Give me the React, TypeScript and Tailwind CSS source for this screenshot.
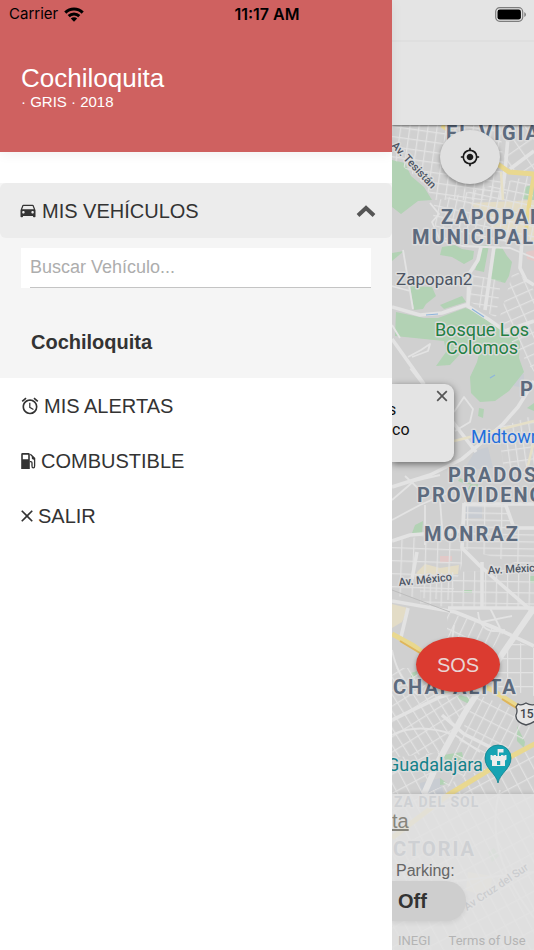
import { useState } from "react";
import { IoMdCar } from "react-icons/io";
import { MdAlarm, MdClose, MdMyLocation } from "react-icons/md";

function FuelPump({ className }: { className?: string }) {
  return (
    <svg className={className} viewBox="0 0 15 16" fill="none">
      <path
        d="M1.500 0 H7.500 Q8.800 0 8.800 1.300 V16 H0.200 V1.300 Q0.200 0 1.500 0 Z M1.800 1.800 V6.200 H7.200 V1.800 Z"
        fill="currentColor"
        fillRule="evenodd"
      />
      <path
        d="M9.300 1.200 L13.600 5.300 V13 Q13.600 14.900 12.300 14.900 Q11 14.900 11 13 V9.800 Q11 8.600 9.800 8.600 H8.800"
        stroke="currentColor"
        strokeWidth="1.3"
      />
      <path d="M10.800 2.800 V5.600 Q11.200 6.900 13.600 6.600 V5.200 Z" fill="currentColor" />
    </svg>
  );
}

const menuItems = [
  { label: "MIS ALERTAS", icon: MdAlarm, iconClass: "-ml-px h-5 w-5", gap: "gap-1" },
  { label: "COMBUSTIBLE", icon: FuelPump, iconClass: "h-4 w-[15px]", gap: "gap-[5px]" },
  { label: "SALIR", icon: MdClose, iconClass: "-ml-1 h-5 w-5", gap: "gap-px" },
] as const;

const greens = [
  "M392 160 L405 163 L411 176 L424 187 L432 200 L418 201 L401 214 L392 207 Z",
  "M525 187 L534 184 V200 L522 199 Z",
  "M442 247 L455 245 L462 249 L474 251 L473 259 L464 264 L452 257 L440 255 Z",
  "M480 246 L489 245 L484 272 L475 270 L479 258 Z",
  "M495 249 L501 246 L507 256 L512 262 L509 276 L505 283 L490 279 Z",
  "M392 253 L404 251 L392 261 Z",
  "M410 286 L432 287 L436 296 L426 304 L423 309 L414 310 Z",
  "M440 305 L462 296 L466 302 L444 309 Z",
  "M396 312 L424 318 L438 318 L465 308 L480 312 L494 324 L520 338 L520 349 L496 346 L470 352 L462 352 L450 365 L436 366 L446 352 L444 341 L395 336 Z",
  "M480 350 L520 344 L519 358 L524 372 L509 391 L495 401 L480 402 L471 393 L470 377 L477 362 Z",
  "M479 408 L484 409 L483 418 L478 416 Z",
  "M460 478 L474 485 L466 484 L458 481 Z",
  "M470 485 L478 484 L478 488 L467 490 Z",
  "M527 408 L534 403 V411 Z",
  "M412 533 L415 525 L423 521 L422 533 Z",
  "M464 590 H472 V593 H464 Z",
  "M530 576 H534 V583 H530 Z",
  "M411 673 L417 671 L416 677 L411 678 Z",
  "M456 694 L470 698 L469 704 L457 698 Z",
  "M517 726 L525 742 L524 748 L517 741 Z",
  "M443 755 L462 752 L464 762 L448 765 Z",
  "M440 778 L448 784 L440 785 Z",
  "M488 852 L494 848 L499 856 L492 862 Z",
];

const creams = [
  "M470 203 L534 200 V242 L498 238 L486 219 Z",
  "M418 571 L425 564 L440 568 L459 565 L458 574 L432 578 L414 577 Z",
  "M392 604 L408 608 L402 622 L392 628 Z",
  "M440 675 L460 680 L448 695 L437 689 Z",
  "M468 872 L492 876 L490 898 L466 890 Z",
];

// polygon, pattern rotation and block size of each neighbourhood
const blocks = [
  { id: "tesistan", area: "M392 125 H500 L507 200 H434 L420 180 L392 158 Z", rotate: 8, w: 9, h: 10 },
  { id: "vigia", area: "M498 125 H534 V172 L507 170 Z", rotate: -35, w: 17, h: 22 },
  { id: "centro", area: "M434 201 L528 176 L534 200 V243 L440 240 L433 220 Z", rotate: 12, w: 8, h: 10 },
  { id: "zoquipan", area: "M470 274 L501 281 L496 318 L469 301 Z", rotate: 8, w: 11, h: 9 },
  { id: "patria", area: "M514 268 L534 290 V372 L498 323 Z", rotate: -24, w: 14, h: 10 },
  { id: "midtown", area: "M498 428 L534 415 V476 L504 471 Z", rotate: -8, w: 8, h: 12 },
  { id: "providencia", area: "M464 504 H504 L514 529 H534 V568 L464 549 Z", rotate: 1, w: 17, h: 7 },
  { id: "monraz", area: "M392 541 L462 530 V565 L450 600 L392 596 Z", rotate: 2, w: 12, h: 13 },
  { id: "mexico", area: "M420 574 L534 568 V608 L420 606 Z", rotate: 1, w: 11, h: 11 },
  { id: "minerva", area: "M447 612 L505 631 L478 668 L447 655 Z", rotate: 25, w: 9, h: 19 },
  { id: "arcos", area: "M512 640 L534 648 V696 L482 684 Z", rotate: 0, w: 13, h: 14 },
  { id: "chapalita", area: "M392 668 L436 668 L478 686 L440 752 L392 758 Z", rotate: -32, w: 9, h: 13 },
  { id: "jardines", area: "M476 694 L516 710 L534 732 L440 792 Z", rotate: 27, w: 9, h: 15 },
  { id: "sol", area: "M392 758 L440 752 L424 794 L534 748 V950 H392 Z", rotate: -28, w: 11, h: 17 },
];

const minorRoads = [
  "M392 286 L410 291 M403 250 L413 309 M392 325 L400 338",
  "M430 203 L439 214 L432 222 L440 240 L462 246 L510 248 L534 258",
  "M408 357 L421 350 L430 344 L428 351 L412 357",
  "M454 412 L464 397 L473 409 L470 422 L455 431",
  "M392 500 L414 481 L440 475 M392 520 L420 505 L450 492 M405 476 L420 490",
  "M425 505 L425 545 M440 500 L443 540",
  "M454 625 L451 650 M392 650 Q398 680 418 695",
  "M478 612 Q480 636 505 630 M490 608 L500 628 M482 622 L512 616",
  "M392 735 Q418 722 455 735 L480 752",
  "M500 790 Q482 850 534 918 M392 910 L430 884 L534 872",
];

const majorRoads = [
  "M392 307 L420 315 L442 313 L466 305 L488 319 L505 331 L534 321",
  "M481 247 L478 260 L469 274 L468 305",
  "M494 247 L485 310",
  "M509 125 L505 172 L501 200 M534 151 L510 169",
  "M522 240 L520 268 L526 280 L534 285",
  "M392 339 L424 384 M411 368 L476 452",
  "M534 381 L518 407 L503 424 L481 443 L462 459 L430 475 L392 487",
  "M392 541 L410 535 L460 531 M464 503 L462 548 L480 566 L534 613",
  "M464 504 H534 M504 500 L514 528 H534",
  "M412 579 L417 552 M482 562 V608",
  "M392 601 L455 612 L498 629 L534 646",
  "M448 608 H534",
  "M408 608 L401 637",
  "M392 720 L440 697 L482 685",
  "M442 715 L464 734 L492 748",
];

function Blocks() {
  return (
    <>
      <defs>
        {blocks.map((b) => (
          <pattern
            key={b.id}
            id={b.id}
            width={b.w}
            height={b.h}
            patternUnits="userSpaceOnUse"
            patternTransform={`rotate(${b.rotate})`}
          >
            <path d={`M0 0 H${b.w} M0 0 V${b.h}`} stroke="#e2e2e2" strokeWidth="2.4" />
          </pattern>
        ))}
      </defs>
      {blocks.map((b) => (
        <path key={b.id} d={b.area} fill={`url(#${b.id})`} />
      ))}
    </>
  );
}

function CityMap() {
  return (
    <svg
      className="absolute inset-0 h-full w-full"
      viewBox="392 125 142 825"
      preserveAspectRatio="xMinYMin slice"
      fontFamily="Roboto, sans-serif"
      role="img"
      aria-label="Mapa"
    >
      <rect x="392" y="125" width="900" height="900" fill="#d0d0d0" />
      <path d="M475 451 L488 447 L493 468 L464 470 Z M512 374 H524 V388 L514 386 Z M466 506 H482 V518 H466 Z M420 783 L440 778 L444 795 H420 Z" fill="#c8ccd2" />
      <path d="M526 252 L534 250 V261 L527 259 Z M440 556 H452 V561 H440 Z M440 560 H450 V563 H440 Z" fill="#e2c9c8" />
      {creams.map((d) => (
        <path key={d} d={d} fill="#e3dcc6" />
      ))}
      {greens.map((d) => (
        <path key={d} d={d} fill="#b2d2b4" />
      ))}
      <Blocks />
      <g fill="none" stroke="#e3e3e3" strokeLinejoin="round">
        {minorRoads.map((d) => (
          <path key={d} d={d} strokeWidth="1.8" />
        ))}
        {majorRoads.map((d) => (
          <path key={d} d={d} strokeWidth="3.6" />
        ))}
        <path d="M534 608 L503 653 L464 714 L438 762 L424 794" strokeWidth="6" />
      </g>
      <path d="M426 315 L438 314 M472 309 L484 317 M490 378 L495 375" stroke="#8db5dc" strokeWidth="1.2" />
      <path d="M392 590 L450 612" stroke="#bcbcbc" strokeWidth="1" />
      <g fill="none" stroke="#e9d88f" strokeWidth="5" strokeLinejoin="round">
        <path d="M442 125 L462 140 L499 165 L509 172 L534 174" />
        <path d="M534 174 L529 205 L526 230" strokeWidth="4" />
        <path d="M392 634 L414 646 L440 665 L492 690 L517 706 L534 714" />
        <path d="M540 741 L512 756 L448 795 L392 838" />
      </g>
      <path d="M400 641 L420 653 M502 699 L518 709" fill="none" stroke="#dfb65b" strokeWidth="2" />
      <path d="M501 172 L503 200 M534 440 L527 470 M454 441 L534 421" fill="none" stroke="#e6e0c8" strokeWidth="2.5" />

      <g stroke="#dcdcdc" strokeWidth="3" strokeLinejoin="round" paintOrder="stroke" fontWeight="500">
        <g fill="#5d6b7e" fontSize="20" fontWeight="700" letterSpacing="2">
          <text x="446" y="140">EL VIGIA</text>
          <text x="441" y="224">ZAPOPAN</text>
          <text x="412" y="244">MUNICIPAL</text>
          <text x="520" y="396">PR</text>
          <text x="448" y="482">PRADOS</text>
          <text x="417" y="502">PROVIDENCIA</text>
          <text x="424" y="541">MONRAZ</text>
          <text x="393" y="694">CHAPALITA</text>
        </g>
        <g fill="#5d6b7e" fontWeight="700" letterSpacing="2">
          <text x="394" y="807" fontSize="14" letterSpacing="1">ZA DEL SOL</text>
          <text x="393" y="856" fontSize="20">CTORIA</text>
        </g>
        <g fill="#4c5563" fontWeight="400">
          <text x="396" y="285" fontSize="17">Zapopan2</text>
          <g fontWeight="500" fontSize="11">
            <text transform="translate(391 146) rotate(47)">Av. Tesistán</text>
            <text transform="translate(399 586) rotate(-6)">Av. México</text>
            <text transform="translate(488 574) rotate(-3)">Av. México</text>
            <text transform="translate(467 911) rotate(-34)">Av Cruz del Sur</text>
          </g>
        </g>
        <g fill="#238043" fontSize="18" fontWeight="400" textAnchor="middle">
          <text x="482" y="336">Bosque Los</text>
          <text x="482" y="354">Colomos</text>
        </g>
        <text x="471" y="443" fontSize="18" fontWeight="400" fill="#1f6fdc">Midtown</text>
        <text x="387" y="771" fontSize="18" fontWeight="400" fill="#12818a">Guadalajara</text>
      </g>

      <path
        d="M518 704 Q521 706 526 703 Q531 706 536 704 L538 707 Q536 711 538 716 Q537 722 526 725 Q515 722 516 715 Q518 711 516 707 Z"
        fill="#e6e6e6"
        stroke="#4b4f55"
        strokeWidth="1.3"
      />
      <text x="520" y="718" fontSize="12" fontWeight="500" fill="#3f444b">15</text>

      <path d="M498 783 C496 773 485 769 485 758 A13 13 0 0 1 511 758 C511 769 500 773 498 783 Z" fill="#16a3b3" stroke="#12808c" strokeWidth="0.8" />
      <path
        d="M497.600 749 H503.500 V752.500 H499 V756 H501 V755 H503.500 V756 H504.500 V755 H506.500 V759.500 L505 760.500 V766 H492 V760.500 L490.500 759.500 V755 H492.500 V756 H493.500 V755 H496 V756 H497.600 Z M497 761 V765 H500.200 V761 Z"
        fill="#ececec"
        fillRule="evenodd"
      />
    </svg>
  );
}

function StatusBar() {
  return (
    <div className="absolute inset-x-0 top-0 z-20 grid h-7 grid-cols-3 items-center px-[9px] font-[Inter,sans-serif] text-[15px] text-black">
      <div className="flex items-center gap-[6px]">
        <span>Carrier</span>
        <svg className="h-[15px] w-5" viewBox="0 0 20 15">
          <g fill="none" stroke="#000" strokeWidth="3">
            <path d="M1.300 5.600 A12.300 12.300 0 0 1 18.700 5.600" />
            <path d="M4.700 9.100 A7.500 7.500 0 0 1 15.300 9.100" />
          </g>
          <path d="M10 14.800 L6.800 11.600 A4.500 4.500 0 0 1 13.200 11.600 Z" />
        </svg>
      </div>
      <span className="text-center text-base font-semibold">11:17 AM</span>
      <svg className="-mr-0.5 h-[15px] w-8 justify-self-end" viewBox="0 0 32 15">
        <rect x="0.700" y="0.700" width="27" height="13.600" rx="4" fill="none" stroke="#7d7d7d" strokeWidth="1.200" />
        <rect x="2.500" y="2.500" width="23.400" height="10" rx="2.300" />
        <path d="M29.300 5 Q31 6 31 7.500 Q31 9 29.300 10 Z" fill="#7d7d7d" />
      </svg>
    </div>
  );
}

function Drawer() {
  const [open, setOpen] = useState(true);

  return (
    <aside className="z-10 w-[392px] max-w-[80%] shrink-0 bg-white text-[#333]">
      <header className="bg-[#cf6160] px-[21px] pt-16 pb-10 text-white shadow-[0_2px_12px_rgba(0,0,0,0.06)]">
        <h1 className="text-[26px] leading-7">Cochiloquita</h1>
        <p className="text-[15px] leading-5">· GRIS · 2018</p>
      </header>

      <nav className="pt-[31px] text-xl">
        <section className="bg-[#f5f5f5]">
          <button
            type="button"
            aria-expanded={open}
            onClick={() => setOpen(!open)}
            className="flex h-[55px] w-full items-center gap-1 rounded-md bg-[#ececec] px-[18px]"
          >
            <IoMdCar className="h-5 w-5" />
            <span>MIS VEHÍCULOS</span>
            <svg className="-mr-0.5 ml-auto h-3 w-5" viewBox="0 0 20 12" fill="none" stroke="#555" strokeWidth="4">
              <path d="M2 10.500 L10 3 L18 10.500" />
            </svg>
          </button>
          {open && (
            <div className="px-[21px] pt-[10px]">
              <div className="bg-white pl-[9px]">
                <input
                  type="text"
                  aria-label="Buscar Vehículo"
                  placeholder="Buscar Vehículo..."
                  className="h-10 w-full border-b border-[#c4c4c4] text-lg outline-none placeholder:text-[#adadad]"
                />
              </div>
              <a href="#cochiloquita" className="block px-[10px] pt-10 pb-[22px] leading-7 font-bold">
                Cochiloquita
              </a>
            </div>
          )}
        </section>
        {menuItems.map((item) => {
          const Icon = item.icon;
          return (
            <a key={item.label} href="#menu" className={`flex h-[55px] items-center px-[21px] ${item.gap}`}>
              <Icon className={item.iconClass} />
              <span>{item.label}</span>
            </a>
          );
        })}
      </nav>
    </aside>
  );
}

export default function App() {
  return (
    <div className="relative flex min-h-screen overflow-hidden bg-white font-['Liberation_Sans',Arial,sans-serif]">
      <StatusBar />
      <Drawer />
      <main className="flex min-w-0 flex-1 flex-col">
        <div className="z-[1] bg-[#e4e4e4] pt-10 shadow-[0_1px_2px_rgba(0,0,0,0.5)]">
          <div className="h-[85px] border-t-2 border-[#dfdfdf]" />
        </div>
        <div className="relative flex-1 overflow-hidden">
          <CityMap />

          <button
            type="button"
            aria-label="Mi ubicación"
            className="absolute top-[5px] left-12 flex h-[54px] w-[60px] items-center justify-center rounded-[50%] bg-[#e0e0e0] shadow-[0_2px_4px_rgba(0,0,0,0.35)]"
          >
            <MdMyLocation className="h-5 w-5 text-[#1a1a1a]" />
          </button>

          <div className="absolute top-[259px] left-0 h-[78px] w-[62px] rounded-r-[9px] bg-[#e4e4e4] pt-4 shadow-[0_2px_7px_rgba(0,0,0,0.5)]">
            <button type="button" aria-label="Cerrar" className="absolute top-[6px] right-[6px]">
              <svg className="h-3 w-3" viewBox="0 0 12 12" stroke="#555" strokeWidth="1.700">
                <path d="M1.200 1.200 L10.800 10.800 M10.800 1.200 L1.200 10.800" />
              </svg>
            </button>
            <p className="-ml-1 font-[Roboto,sans-serif] text-base leading-5 text-[#111]">
              s
              <br />
              <span className="ml-1">co</span>
            </p>
          </div>

          <button
            type="button"
            className="absolute top-[512px] left-6 h-[55px] w-[84px] rounded-[50%] bg-[#db3b30] text-xl text-[#e9d5d4] shadow-[0_2px_4px_rgba(0,0,0,0.35)]"
          >
            SOS
          </button>

          <div className="absolute inset-x-0 bottom-0 h-[156px] bg-[#e2e2e2]/85 pt-[15px] shadow-[0_-1px_4px_rgba(0,0,0,0.12)]">
            <a href="#vehiculo" className="block text-xl leading-6 text-[#87857c] underline">
              ta
            </a>
            <p className="mt-7 ml-1 text-base leading-5 text-[#666]">Parking:</p>
            <button
              type="button"
              className="block h-10 w-[74px] rounded-r-[20px] bg-[#cecece] pl-[6px] text-left text-xl font-bold text-[#333] shadow-[0_2px_5px_rgba(0,0,0,0.08)]"
            >
              Off
            </button>
            <div className="absolute bottom-0 left-[6px] flex gap-[18px] font-[Roboto,sans-serif] text-[13px] whitespace-nowrap text-[#b4b4b4]">
              <span>INEGI</span>
              <a href="#terms">Terms of Use</a>
            </div>
          </div>
        </div>
      </main>
    </div>
  );
}
